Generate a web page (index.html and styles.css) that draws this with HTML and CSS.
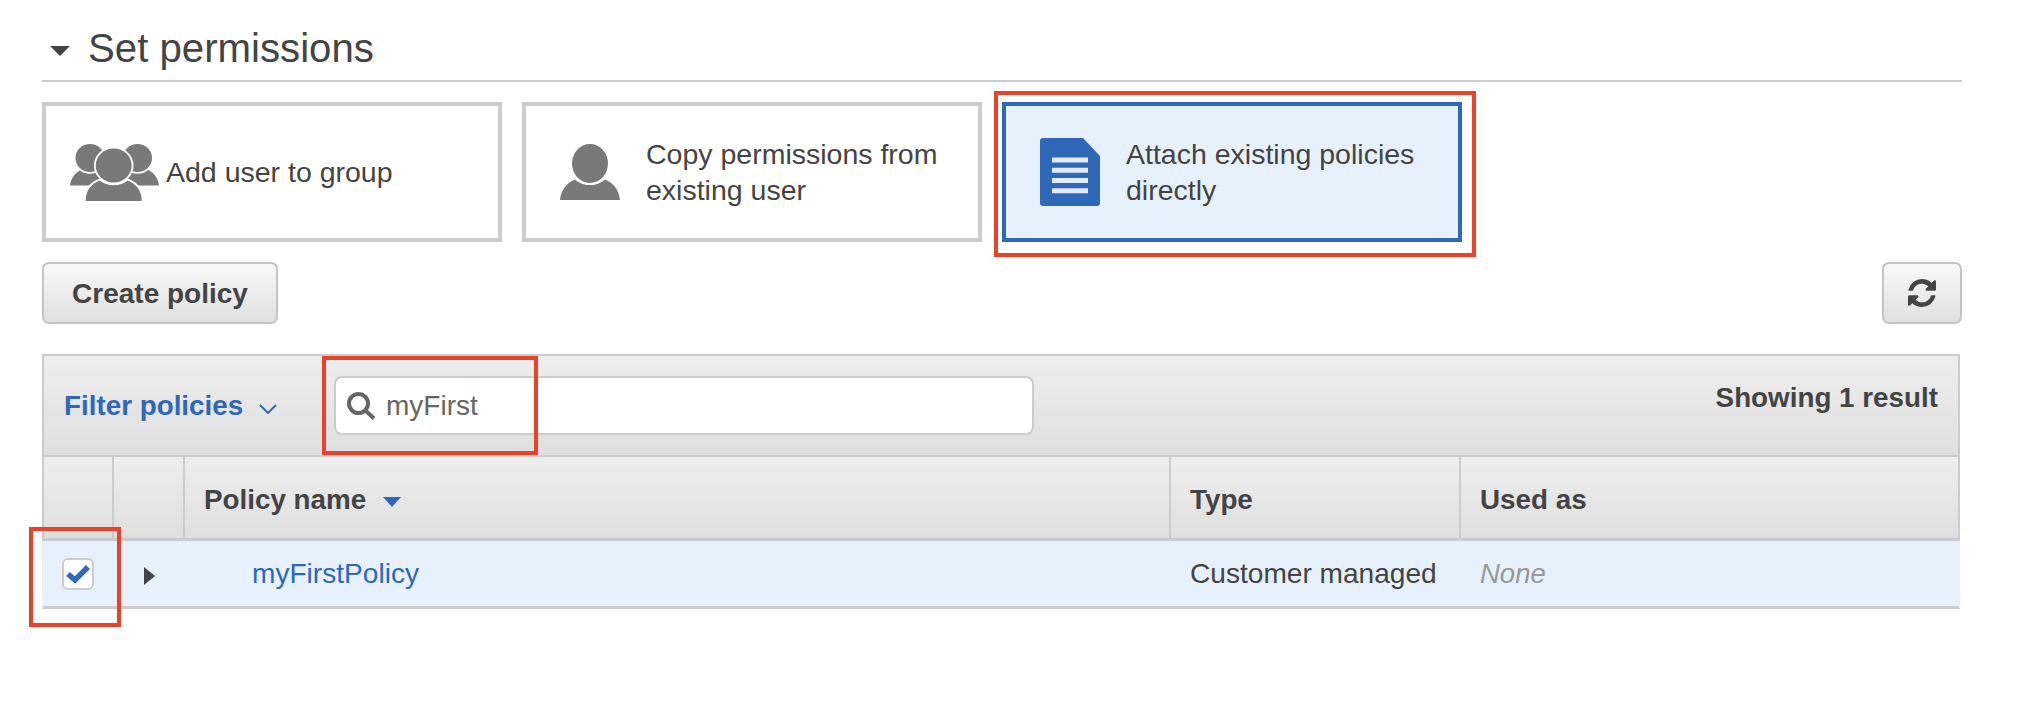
FILE: index.html
```html
<!DOCTYPE html>
<html lang="en">
<head>
<meta charset="utf-8">
<title>Set permissions</title>
<link rel="stylesheet" href="styles.css">
</head>
<body>
<main class="page">
  <header class="section-head">
    <svg class="caret-down" viewBox="0 0 20 10"><path d="M0 0H20L10 10Z"/></svg>
    <h2 class="section-title">Set permissions</h2>
  </header>

  <div class="cards">
    <div class="card">
      <svg class="icon-group" viewBox="0 0 89 57">
        <path class="gray" d="M0 41.500C1 34 5 29 11 25.500L32 30V41.500Z"/>
        <path class="gray" d="M89 41.500C88 34 84 29 78 25.500L57 30V41.500Z"/>
        <ellipse class="gray" cx="20" cy="14" rx="14.500" ry="14"/>
        <ellipse class="gray" cx="67.500" cy="14" rx="14.500" ry="14"/>
        <path class="gray" d="M15.700 57c0-10 5-17 14-20.500 3.500 3 8.500 4.800 14 4.800s10.500-1.800 14-4.800c9 3.500 14 10.500 14 20.500Z"/>
        <ellipse class="gray" cx="43.700" cy="21.500" rx="18" ry="17"/>
      </svg>
      <span class="card-label">Add user to group</span>
    </div>
    <div class="card">
      <svg class="icon-user" viewBox="0 0 60 56">
        <path class="gray" d="M0 56c1-11 8-18 15-20.500 3.500 3.500 9 5.500 15 5.500s11.500-2 15-5.500C52 38 59 45 60 56Z"/>
        <ellipse class="gray" cx="30" cy="19.500" rx="18" ry="19.500"/>
      </svg>
      <span class="card-label">Copy permissions from<br>existing user</span>
    </div>
    <div class="card card-selected">
      <svg class="icon-doc" viewBox="0 0 60 68">
        <path class="blue" d="M3 0H43L60 18V65a3 3 0 0 1-3 3H3a3 3 0 0 1-3-3V3a3 3 0 0 1 3-3Z"/>
        <path class="pale" d="M12 19.500H48V24.500H12ZM12 29.800H48V34.800H12ZM12 40H48V45H12ZM12 50.300H48V55.300H12Z"/>
      </svg>
      <span class="card-label">Attach existing policies<br>directly</span>
    </div>
  </div>

  <div class="toolbar">
    <button class="btn btn-text">Create policy</button>
    <button class="btn btn-icon" aria-label="Refresh">
      <svg class="icon-refresh" viewBox="128 128 1536 1536">
        <path class="dark" d="M1639 1056q0 5-1 7-64 268-268 434.500t-478 166.500q-146 0-282.500-55t-243.500-157l-129 129q-19 19-45 19t-45-19-19-45v-448q0-26 19-45t45-19h448q26 0 45 19t19 45-19 45l-137 137q71 66 161 102t187 36q134 0 250-65t186-179q11-17 53-117 8-23 30-23h192q13 0 22.500 9.500t9.500 22.500zm25-800v448q0 26-19 45t-45 19h-448q-26 0-45-19t-19-45 19-45l138-138q-148-137-349-137-134 0-250 65t-186 179q-11 17-53 117-8 23-30 23h-199q-13 0-22.500-9.500t-9.500-22.500v-7q65-268 270-434.500t480-166.500q146 0 284 55.500t245 156.500l130-129q19-19 45-19t45 19 19 45z"/>
      </svg>
    </button>
  </div>

  <section class="table">
    <div class="filter-bar">
      <button class="filter-toggle">Filter policies
        <svg class="chevron" viewBox="0 0 18 10"><path d="M1 1L9 9L17 1"/></svg>
      </button>
      <div class="search">
        <svg class="icon-search" viewBox="0 0 29 28"><circle cx="11.500" cy="11.500" r="9.500"/><path d="M18.500 18.500L27 26.500"/></svg>
        <span class="search-value">myFirst</span>
      </div>
      <span class="result-count">Showing 1 result</span>
    </div>
    <div class="row row-head">
      <div class="cell"></div>
      <div class="cell"></div>
      <div class="cell cell-name">Policy name
        <svg class="sort" viewBox="0 0 18 10"><path d="M0 0H18L9 10Z"/></svg>
      </div>
      <div class="cell cell-text">Type</div>
      <div class="cell cell-text">Used as</div>
    </div>
    <div class="row row-body">
      <div class="cell cell-check">
        <span class="checkbox">
          <svg viewBox="0 0 24 20"><path d="M2 10L9 16L22 3"/></svg>
        </span>
      </div>
      <div class="cell cell-center">
        <svg class="expand" viewBox="0 0 11 18"><path d="M0 0L11 9L0 18Z"/></svg>
      </div>
      <div class="cell cell-link"><a class="policy-link" href="#">myFirstPolicy</a></div>
      <div class="cell cell-text">Customer managed</div>
      <div class="cell cell-text cell-none">None</div>
    </div>
  </section>

  <div class="mark mark-card"></div>
  <div class="mark mark-search"></div>
  <div class="mark mark-check"></div>
</main>
</body>
</html>
```
FILE: styles.css
```css
* { box-sizing: border-box; }
html, body { margin: 0; background: #fff; }
body { font-family: "Liberation Sans", Arial, sans-serif; color: #444; }
.page { position: relative; width: 2044px; height: 720px; padding: 0 82px 0 42px; overflow: hidden; }

.section-head { display: flex; align-items: center; height: 82px; border-bottom: 2px solid #ccc; padding: 18px 0 0 8px; }
.caret-down { width: 20px; height: 10px; fill: #444; margin: 4px 18px 0 0; }
.section-title { margin: 0; font-size: 40.200px; font-weight: 400; line-height: 44px; }

.cards { display: flex; gap: 20px; margin-top: 20px; }
.card { display: flex; align-items: center; width: 460px; height: 140px; border: 4px solid #ccc; background: #fff; padding-left: 24px; }
.card-selected { border-color: #2e68b7; background: #e7f1fc; padding-left: 34px; }
.card-label { font-size: 28.500px; line-height: 36px; color: #444; }
.icon-group { width: 89px; height: 57px; margin-right: 7px; }
.icon-user { width: 60px; height: 56px; margin: 0 26px 0 10px; }
.icon-doc { width: 60px; height: 68px; margin-right: 26px; }
.gray { fill: #797979; stroke: #fff; stroke-width: 3.600px; paint-order: stroke; }
.blue { fill: #2e68b7; }
.pale { fill: #e2ecf8; }

.toolbar { display: flex; justify-content: space-between; margin-top: 20px; }
.btn { height: 62px; border: 2px solid #c4c4c4; border-radius: 7px; background: linear-gradient(#f8f8f8, #e0e0e0); color: #444; font-family: inherit; padding: 0; }
.btn-text { width: 236px; font-size: 28px; font-weight: 700; padding-top: 2px; }
.btn-icon { width: 80px; display: flex; align-items: center; justify-content: center; }
.icon-refresh { width: 28px; height: 28px; }
.dark { fill: #444; }

.table { width: 1918px; margin-top: 30px; }
.filter-bar { display: flex; align-items: center; height: 103px; border: 2px solid #ccc; border-bottom-width: 2px; background: linear-gradient(#eeeeee, #dfdfdf); padding: 0 20px; }
.filter-toggle { display: flex; align-items: center; border: 0; padding: 0; background: none; color: #2e68b7; font-family: inherit; font-size: 27.800px; font-weight: 700; width: 270px; }
.chevron { width: 18px; height: 10px; fill: none; stroke: #2e68b7; stroke-width: 2px; margin: 6px 0 0 16px; }
.search { display: flex; align-items: center; width: 700px; height: 59px; border: 2px solid #ccc; border-radius: 8px; background: #fff; padding-left: 11px; }
.icon-search { width: 29px; height: 28px; fill: none; stroke: #666; stroke-width: 4px; margin-right: 10px; }
.search-value { font-size: 28px; color: #666; }
.result-count { margin-left: auto; font-size: 27.800px; font-weight: 700; padding-bottom: 16px; }

.row { display: grid; grid-template-columns: 68px 71px 986px 290px 1fr; }
.row-head { height: 84px; border: 2px solid #ccc; border-width: 0 2px 3px; background: linear-gradient(#eeeeee, #dfdfdf); font-size: 27.800px; font-weight: 700; }
.row-head .cell { padding-top: 4px; }
.row-head .cell + .cell { border-left: 2px solid #ccc; }
.row-head .cell-text, .row-head .cell-name { padding-left: 19px; }
.row-body { height: 68px; border: 2px solid #e7f1fc; border-width: 0 2px; border-bottom: 3px solid #ccc; background: #e7f1fc; font-size: 28.100px; }
.cell { display: flex; align-items: center; min-width: 0; }
.cell-name { padding-left: 19px; }
.cell-text { padding-left: 21px; }
.cell-center { justify-content: center; padding-left: 4px; }
.cell-check { padding-left: 18px; }
.cell-link { padding-left: 69px; }
.cell-none { color: #999; font-style: italic; font-size: 27.500px; }
.sort { width: 18px; height: 10px; fill: #2e68b7; margin: 4px 0 0 17px; }
.expand { width: 11px; height: 18px; fill: #444; margin-top: 4px; }
.policy-link { color: #2e68b7; text-decoration: none; }
.checkbox { display: flex; align-items: center; justify-content: center; width: 32px; height: 32px; border: 2px solid #ccc; border-radius: 6px; background: #fff; }
.checkbox svg { width: 24px; height: 20px; fill: none; stroke: #2e68b7; stroke-width: 5.500px; }

.mark { position: absolute; border: 4px solid #e8432a; }
.mark-card { left: 994px; top: 91px; width: 482px; height: 166px; }
.mark-search { left: 322px; top: 356px; width: 216px; height: 99px; }
.mark-check { left: 29px; top: 527px; width: 92px; height: 100px; }
```
